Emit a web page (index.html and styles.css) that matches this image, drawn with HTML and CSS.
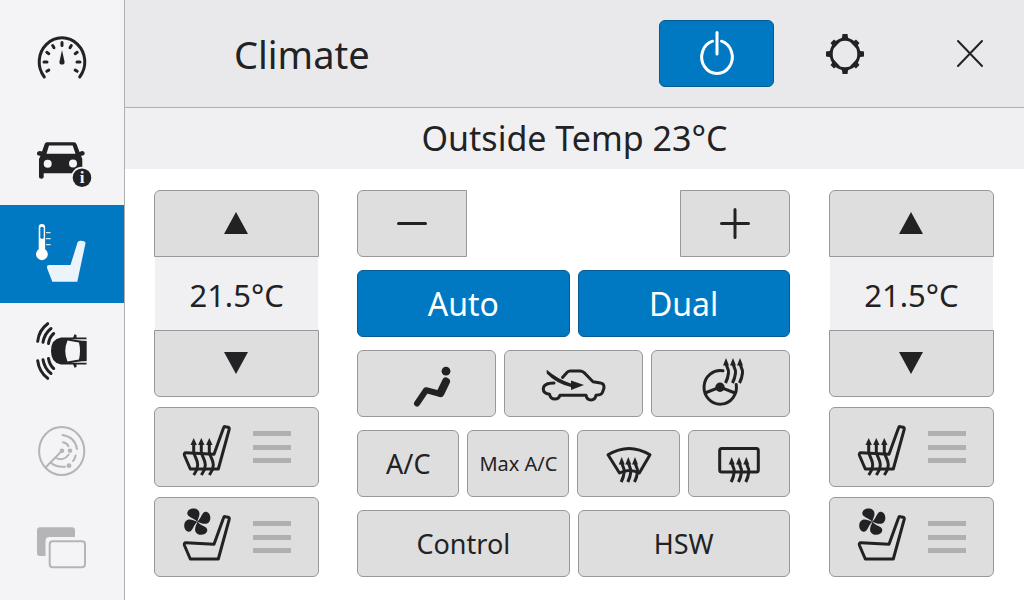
FILE: index.html
```
<!DOCTYPE html>
<html lang="en">
<head>
    <meta charset="UTF-8">
    <meta name="viewport" content="width=device-width, initial-scale=1.0">
    <title>Climate</title>
    <link rel="stylesheet" href="styles.css">
</head>
<body>
    <!-- shared icon parts -->
    <svg class="defs" aria-hidden="true">
        <defs>
            <g id="heat">
                <path class="line thin" d="M0 4C0 8 3 9 2.500 14C2 19 1 21-.5 24"/>
                <path d="M0-1L3 6.500H-3Z"/>
            </g>
            <g id="heatLong">
                <path class="line thin" d="M0 5V13C1 19 4 20 4 26C4 31 2 33 0 36"/>
                <path d="M0-1L3.200 6H-3.200Z"/>
            </g>
            <path id="seat" class="line" d="M4 35.700L32 37.300L41.500 11Q42 9.300 43.500 9.700L46 10.300Q47.600 10.800 47.200 12.400L36.300 52H8.300L2.500 38.500Q1.700 35.700 4 35.700Z"/>
            <path id="blade" d="M0 0C1-4 3-6 1.800-10C0-14.500-9-14-10-9C-10.500-4.500-4-4.500 0 0Z"/>
            <path id="tooth" d="M-2.500-20H2.500L3-16.500L4.500-14H-4.500L-3-16.500Z"/>
            <g id="waves">
                <path d="M15.700 1.700Q7 8 5.700 19.300"/>
                <path d="M19 6.500Q12.500 11.500 11 20.300"/>
                <path d="M21.700 11.500Q17.500 15 16.500 21.500"/>
            </g>
        </defs>
    </svg>

    <div class="screen">
        <nav class="sidebar">
            <a href="#gauges" aria-label="Gauges">
                <svg width="60" height="60" viewBox="0 0 60 60">
                    <path class="line" d="M12.300 49A22.800 24 0 1 1 47.700 49"/>
                    <path class="line tick" d="M30 14.500v3M20.700 17.500l1.300 2.200M39.300 17.500l-1.300 2.200M14.800 24.300l2 1.400M45.200 24.300l-2 1.400M12 34h3M48 34h-3M14.800 43.300l2-1.200M45.200 43.300l-2-1.200"/>
                    <path d="M30 22L32.600 34A2.600 2.600 0 0 1 27.400 34Z"/>
                </svg>
            </a>
            <a href="#vehicle" aria-label="Vehicle info">
                <svg width="60" height="60" viewBox="0 0 60 60">
                    <path fill-rule="evenodd" d="M15 16.300H42Q44 16.300 44.500 18L47.500 26Q49 25 51 25Q53 26 52.700 28Q52 30 49 29.700L50.300 33V47.300H11.700V51Q11.700 52.700 9.400 52.700Q7 52.700 7 51V33L8.500 29.700Q5 30 5 27.500Q5 25 8 25L10 25.500L12.700 18Q13.200 16.300 15 16.300ZM17 19.500L14.500 27.800H43.500L40.700 19.500Z"/>
                    <circle class="hole" cx="15.700" cy="37.700" r="4"/>
                    <circle class="hole" cx="41" cy="37.500" r="4"/>
                    <circle class="hole" cx="50" cy="51.700" r="11"/>
                    <circle cx="50" cy="51.700" r="9.300"/>
                    <text class="info" x="50" y="57" text-anchor="middle">i</text>
                </svg>
            </a>
            <a href="#climate" class="active" aria-label="Climate">
                <svg width="60" height="60" viewBox="0 0 60 60">
                    <path d="M6.700 3.200A3.200 3.200 0 0 1 13.100 3.200V25.300A5.900 5.900 0 1 1 6.700 25.300Z"/>
                    <rect class="hole" x="8.300" y="2.700" width="3.400" height="12" rx="1.500"/>
                    <path class="line scale" d="M14 8.700h4.700M14 14.700h4.700M14 20.700h4.700"/>
                    <path class="cushion" d="M17 41H38.500L45.500 18.500Q46.300 16.400 49 16.700L52 17.300Q54 18 53.300 20.200L45.300 57.700H20.300L15.200 44.500Q14.200 41.200 17 41Z"/>
                </svg>
            </a>
            <a href="#parking" aria-label="Park assist">
                <svg width="60" height="60" viewBox="0 0 60 60">
                    <path d="M29 15.500H54.500V18L52 19H54.700V39H52L54.500 40V42.500H29Q19 41 19 29Q19 17 29 15.500Z"/>
                    <path class="hole" d="M35.500 18.500L47 20.500Q49 29 47 37.500L35.500 39.500Q31 29 35.500 18.500ZM39 17.200H54.700V18.800H50ZM39 40.800H54.700V39.200H50Z"/>
                    <path d="M41 16L42.500 12.300L44.500 13V16ZM41 42L42.500 45.700L44.500 45V42Z"/>
                    <g class="line"><use href="#waves"/><use href="#waves" transform="matrix(1 0 0 -1 0 58)"/></g>
                </svg>
            </a>
            <a href="#radar" class="dim" aria-label="Radar">
                <svg width="60" height="60" viewBox="0 0 60 60">
                    <g class="line">
                        <ellipse cx="29.700" cy="31" rx="22.600" ry="24"/>
                        <path d="M30 30.700L14 47M30.500 15Q43 17 45 29M43.600 35.500Q43 39 41 41M31 22.300Q35 23 36.500 26.300M36.800 34.500Q31 42 23.500 37.500M33 46.700Q24 47.500 18.500 42.500"/>
                    </g>
                    <circle cx="30" cy="30.700" r="2.300"/>
                    <circle cx="38" cy="30.700" r="2.300"/>
                    <circle cx="37" cy="45.700" r="2.400"/>
                </svg>
            </a>
            <a href="#windows" class="dim" aria-label="Windows">
                <svg width="60" height="60" viewBox="0 0 60 60">
                    <rect x="5" y="9.300" width="38" height="28.700" rx="3"/>
                    <rect class="hole" x="13.500" y="19" width="43" height="34" rx="4"/>
                    <rect class="line" x="17.700" y="23.300" width="35.300" height="26" rx="3"/>
                </svg>
            </a>
        </nav>

        <div class="content">
            <header class="topbar">
                <h1>Climate</h1>
                <button type="button" class="btn on power" aria-label="Power">
                    <svg width="44" height="44" viewBox="0 0 44 44">
                        <path class="line" d="M26.500 9.200A15.300 16.500 0 1 1 17.500 9.200"/>
                        <path class="line" d="M22 .5V22"/>
                    </svg>
                </button>
                <button type="button" class="plain" aria-label="Settings">
                    <svg width="40" height="42" viewBox="-20 -21 40 42">
                        <ellipse class="line" rx="13.800" ry="14.800"/>
                        <use href="#tooth"/>
                        <use href="#tooth" transform="rotate(45) translate(0 2)"/>
                        <use href="#tooth" transform="rotate(90) translate(0 1)"/>
                        <use href="#tooth" transform="rotate(135) translate(0 2)"/>
                        <use href="#tooth" transform="rotate(180)"/>
                        <use href="#tooth" transform="rotate(225) translate(0 2)"/>
                        <use href="#tooth" transform="rotate(270) translate(0 1)"/>
                        <use href="#tooth" transform="rotate(315) translate(0 2)"/>
                    </svg>
                </button>
                <button type="button" class="plain" aria-label="Close">
                    <svg width="28" height="28" viewBox="0 0 28 28">
                        <path class="line close" d="M2 1L26 26M26 1L2 26"/>
                    </svg>
                </button>
            </header>
            <p class="outside">Outside Temp 23°C</p>

            <main class="panel">
                <section class="zone" aria-label="Driver">
                    <div class="temp">
                        <button type="button" class="btn up" aria-label="Warmer">
                            <svg width="25" height="23" viewBox="0 0 25 23"><path d="M12 0L24 22H0Z"/></svg>
                        </button>
                        <output>21.5°C</output>
                        <button type="button" class="btn down" aria-label="Cooler">
                            <svg width="25" height="23" viewBox="0 0 25 23"><path d="M0 0H24L12 22Z"/></svg>
                        </button>
                    </div>
                    <button type="button" class="btn seat" aria-label="Seat heating">
                        <svg width="50" height="60" viewBox="0 0 50 60">
                            <use href="#seat"/>
                            <use href="#heatLong" x="11.700" y="22"/>
                            <use href="#heatLong" x="19.300" y="22"/>
                            <use href="#heatLong" x="27.300" y="22"/>
                        </svg>
                        <span class="level"><i></i><i></i><i></i></span>
                    </button>
                    <button type="button" class="btn seat" aria-label="Seat ventilation">
                        <svg width="50" height="60" viewBox="0 0 50 60">
                            <use href="#seat"/>
                            <g transform="translate(15.300 14.700)">
                                <use href="#blade"/>
                                <use href="#blade" transform="rotate(90)"/>
                                <use href="#blade" transform="rotate(180)"/>
                                <use href="#blade" transform="rotate(270)"/>
                            </g>
                        </svg>
                        <span class="level"><i></i><i></i><i></i></span>
                    </button>
                </section>

                <section class="controls">
                    <div class="row fan">
                        <button type="button" class="btn minus" aria-label="Fan down">
                            <svg width="30" height="30" viewBox="0 0 30 30"><path class="line" d="M1.500 14.500h27"/></svg>
                        </button>
                        <button type="button" class="btn plus" aria-label="Fan up">
                            <svg width="30" height="30" viewBox="0 0 30 30"><path class="line" d="M1.500 14.500h27M15 .5v28"/></svg>
                        </button>
                    </div>
                    <div class="row">
                        <button type="button" class="btn on">Auto</button>
                        <button type="button" class="btn on">Dual</button>
                    </div>
                    <div class="row">
                        <button type="button" class="btn" aria-label="Air direction">
                            <svg width="50" height="50" viewBox="0 0 50 50">
                                <circle cx="44" cy="12.200" r="4.400"/>
                                <path class="line torso" d="M44 22.500L38.500 34"/>
                                <path class="line thigh" d="M38.500 35L24 31.200L15 44.500"/>
                            </svg>
                        </button>
                        <button type="button" class="btn" aria-label="Recirculation">
                            <svg width="70" height="50" viewBox="0 0 70 50">
                                <path class="line" d="M16 24C10 24 5.300 25.500 5.300 30Q5.300 34.500 11.500 35.300C13 41.500 20.500 41.500 22 36.200H48C49 42.500 57 42.500 58 36.200Q64 36 64.600 33L66 29Q66.300 24.500 62.500 24L55 22.800L47.500 15Q45 12 42 12H32Q30 12 28.500 14L24.500 18.500"/>
                                <path d="M8.700 10.700Q20 20.500 33 24.500V21.500L46 26L33 31V28Q18 24.500 8.700 14.500Z"/>
                            </svg>
                        </button>
                        <button type="button" class="btn" aria-label="Heated steering wheel">
                            <svg width="50" height="54" viewBox="0 -2 50 54">
                                <path class="line" d="M28 11.800A16.200 16.800 0 1 0 41.200 25.500M10 34L25 28.200L40 34"/>
                                <circle cx="25" cy="28.200" r="4.700"/>
                                <use href="#heat" x="31" y="0"/>
                                <use href="#heat" x="38" y="0"/>
                                <use href="#heat" x="45" y="0"/>
                            </svg>
                        </button>
                    </div>
                    <div class="row">
                        <button type="button" class="btn mid">A/C</button>
                        <button type="button" class="btn small">Max A/C</button>
                        <button type="button" class="btn" aria-label="Front defrost">
                            <svg width="50" height="50" viewBox="0 0 50 50">
                                <path class="line" d="M4 15.800Q25 3 46 15.800L35.300 34Q25 29 15.500 34Z"/>
                                <use href="#heat" x="17.700" y="19"/>
                                <use href="#heat" x="24.300" y="19"/>
                                <use href="#heat" x="31" y="19"/>
                            </svg>
                        </button>
                        <button type="button" class="btn" aria-label="Rear defrost">
                            <svg width="50" height="50" viewBox="0 0 50 50">
                                <rect class="line" x="5.700" y="9.500" width="38.600" height="23.500" rx="2"/>
                                <use href="#heat" x="17.700" y="19"/>
                                <use href="#heat" x="25" y="19"/>
                                <use href="#heat" x="32.300" y="19"/>
                            </svg>
                        </button>
                    </div>
                    <div class="row">
                        <button type="button" class="btn mid">Control</button>
                        <button type="button" class="btn mid">HSW</button>
                    </div>
                </section>

                <section class="zone" aria-label="Passenger">
                    <div class="temp">
                        <button type="button" class="btn up" aria-label="Warmer">
                            <svg width="25" height="23" viewBox="0 0 25 23"><path d="M12 0L24 22H0Z"/></svg>
                        </button>
                        <output>21.5°C</output>
                        <button type="button" class="btn down" aria-label="Cooler">
                            <svg width="25" height="23" viewBox="0 0 25 23"><path d="M0 0H24L12 22Z"/></svg>
                        </button>
                    </div>
                    <button type="button" class="btn seat" aria-label="Seat heating">
                        <svg width="50" height="60" viewBox="0 0 50 60">
                            <use href="#seat"/>
                            <use href="#heatLong" x="11.700" y="22"/>
                            <use href="#heatLong" x="19.300" y="22"/>
                            <use href="#heatLong" x="27.300" y="22"/>
                        </svg>
                        <span class="level"><i></i><i></i><i></i></span>
                    </button>
                    <button type="button" class="btn seat" aria-label="Seat ventilation">
                        <svg width="50" height="60" viewBox="0 0 50 60">
                            <use href="#seat"/>
                            <g transform="translate(15.300 14.700)">
                                <use href="#blade"/>
                                <use href="#blade" transform="rotate(90)"/>
                                <use href="#blade" transform="rotate(180)"/>
                                <use href="#blade" transform="rotate(270)"/>
                            </g>
                        </svg>
                        <span class="level"><i></i><i></i><i></i></span>
                    </button>
                </section>
            </main>
        </div>
    </div>
</body>
</html>
```
FILE: styles.css
```
* {
    box-sizing: border-box;
}
body {
    margin: 0;
    font-family: "Noto Sans", "Open Sans", sans-serif;
    color: #222224;
    background-color: #fff;
}
.screen {
    display: flex;
    min-height: 100vh;
}

/* icons */
svg {
    display: block;
    flex: none;
    overflow: visible;
    fill: currentColor;
}
.defs {
    position: absolute;
    width: 0;
    height: 0;
}
.line {
    fill: none;
    stroke: currentColor;
    stroke-width: 3px;
    stroke-linecap: round;
    stroke-linejoin: round;
}
.thin {
    stroke-width: 3px;
    stroke-linecap: butt;
}
.scale {
    stroke-width: 1px;
    stroke-linecap: butt;
}
.close {
    stroke-width: 2px;
}
.tick {
    stroke-width: 3px;
}
.torso {
    stroke-width: 8px;
}
.thigh {
    stroke-width: 6px;
}
.dim .line {
    stroke-width: 2px;
}
.hole {
    fill: #f4f4f6;
}
.info {
    font: bold 17px "Liberation Serif", serif;
    fill: #f4f4f6;
}

/* sidebar */
.sidebar {
    display: flex;
    flex-direction: column;
    flex: none;
    width: 125px;
    padding: 9px 0 3px;
    background-color: #f4f4f6;
    border-right: 1px solid #b0b0b2;
}
.sidebar a {
    display: flex;
    flex: 1;
    align-items: center;
    justify-content: center;
    color: #222224;
}
.sidebar .active {
    background-color: #0079c2;
    color: #fff;
}
.active .hole {
    fill: #0079c2;
}
.cushion {
    fill: #ebf3fb;
}
.sidebar .dim {
    color: #b5b5b7;
}

/* header */
.content {
    flex: 1;
    min-width: 0;
}
.topbar {
    display: flex;
    align-items: center;
    height: 108px;
    padding: 0 30px 0 109px;
    background-color: #e9e9eb;
    border-bottom: 1px solid #b0b0b2;
}
h1 {
    flex: 1;
    margin: 0;
    font-size: 38px;
    font-weight: normal;
}
.plain {
    display: flex;
    align-items: center;
    justify-content: center;
    width: 48px;
    height: 48px;
    margin-left: 47px;
    padding: 0;
    border: none;
    background: none;
    color: inherit;
    cursor: pointer;
}
.plain + .plain {
    margin-left: 77px;
}
.outside {
    margin: 0;
    font-size: 34px;
    line-height: 61px;
    text-align: center;
    background-color: #f0f0f2;
}

/* controls */
.btn {
    display: flex;
    align-items: center;
    justify-content: center;
    height: 67px;
    padding: 0;
    border: 1px solid #98989a;
    border-radius: 6px;
    background-color: #dededf;
    color: inherit;
    font-family: inherit;
    font-size: 32px;
    line-height: 40px;
    cursor: pointer;
}
.btn.on {
    background-color: #0079c2;
    border-color: #045c92;
    color: #fff;
}
.btn.power {
    width: 115px;
}
.btn.mid {
    font-size: 27px;
}
.btn.small {
    font-size: 20px;
}
.panel {
    display: grid;
    grid-template-columns: 165fr 433fr 165fr;
    gap: 38px;
    padding: 21px 30px 23px 29px;
}
.zone {
    display: flex;
    flex-direction: column;
    gap: 10px;
}
.temp {
    display: flex;
    flex-direction: column;
}
.temp output {
    margin: 0 1px;
    padding-top: 3px;
    font-size: 31px;
    line-height: 70px;
    text-align: center;
    background-color: #f0f0f2;
}
.up {
    border-radius: 6px 6px 0 0;
}
.down {
    border-radius: 0 0 6px 6px;
}
.btn.seat {
    gap: 21px;
    height: 80px;
}
.level {
    display: flex;
    flex-direction: column;
    justify-content: space-between;
    width: 38px;
    height: 32px;
}
.level i {
    height: 5px;
    background-color: #b0b0b2;
}
.controls {
    display: flex;
    flex-direction: column;
    gap: 13px;
    padding-right: 1px;
}
.row {
    display: flex;
    gap: 8px;
}
.row .btn {
    flex: 1 1 0;
    min-width: 0;
}
.row.fan {
    justify-content: space-between;
}
.row.fan .btn {
    flex: none;
    width: 110px;
}
.minus {
    border-radius: 6px 0 0 6px;
}
.plus {
    border-radius: 0 6px 6px 0;
}
```
